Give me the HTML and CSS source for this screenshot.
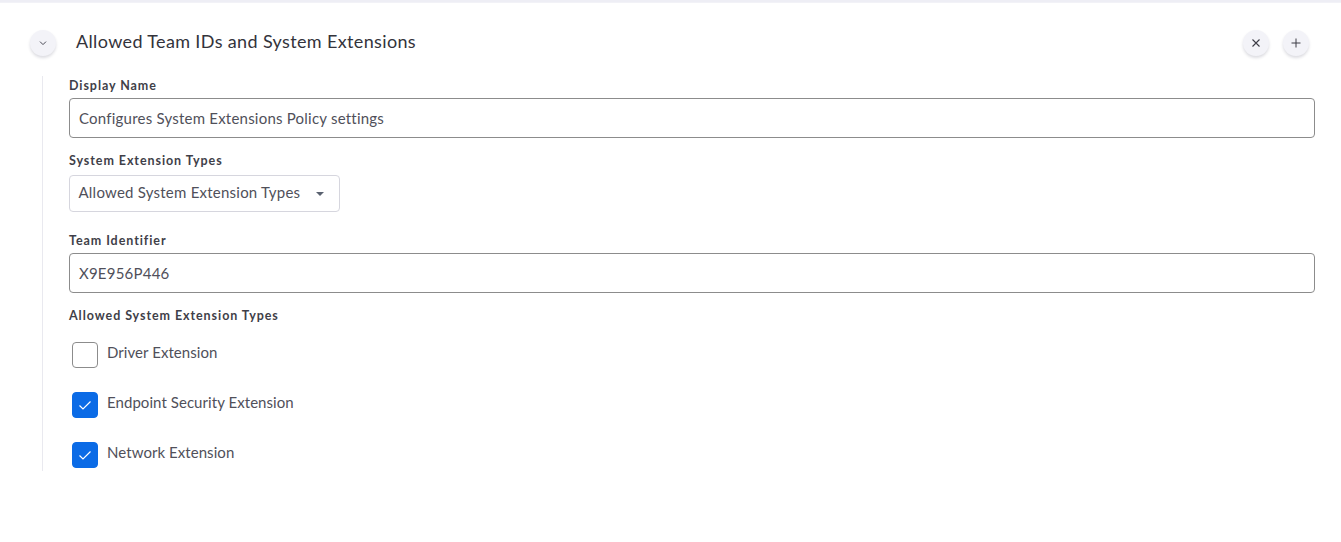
FILE: index.html
```html
<!DOCTYPE html>
<html lang="en">
<head>
<meta charset="utf-8">
<title>Allowed Team IDs and System Extensions</title>
<link rel="stylesheet" href="styles.css">
</head>
<body>
<div class="topbar"></div>
<section class="panel">
  <header class="head">
    <button class="round" type="button" aria-label="Collapse">
      <svg width="10" height="10" viewBox="0 0 10 10"><path d="M2 3.600 5 6.600 8 3.600" fill="none" stroke="#4a4a55" stroke-width="1"/></svg>
    </button>
    <h2 class="title">Allowed Team IDs and System Extensions</h2>
    <div class="actions">
      <button class="round" type="button" aria-label="Remove">
        <svg width="10" height="10" viewBox="0 0 10 10"><path d="M1.500 1.500 8.500 8.500M8.500 1.500 1.500 8.500" fill="none" stroke="#3c3c46" stroke-width="1.100"/></svg>
      </button>
      <button class="round" type="button" aria-label="Add">
        <svg width="10" height="10" viewBox="0 0 10 10"><path d="M5 .5V9.500M.5 5H9.500" fill="none" stroke="#3c3c46" stroke-width="1"/></svg>
      </button>
    </div>
  </header>
  <div class="body">
    <div class="label first">Display Name</div>
    <div class="input">Configures System Extensions Policy settings</div>
    <div class="label l2">System Extension Types</div>
    <div class="select">
      <span>Allowed System Extension Types</span>
      <svg class="caret" width="8" height="4" viewBox="0 0 8 4"><path d="M0 0H8L4 4Z" fill="#5a6270"/></svg>
    </div>
    <div class="label l3">Team Identifier</div>
    <div class="input">X9E956P446</div>
    <div class="label l4">Allowed System Extension Types</div>
    <div class="checks">
      <div class="check"><span class="box"></span><span class="cap">Driver Extension</span></div>
      <div class="check"><span class="box on"><svg width="14" height="14" viewBox="0 0 14 14"><path d="M1.500 7.500 5 11 12.500 3.500" fill="none" stroke="#fff" stroke-width="1.200"/></svg></span><span class="cap">Endpoint Security Extension</span></div>
      <div class="check"><span class="box on"><svg width="14" height="14" viewBox="0 0 14 14"><path d="M1.500 7.500 5 11 12.500 3.500" fill="none" stroke="#fff" stroke-width="1.200"/></svg></span><span class="cap">Network Extension</span></div>
    </div>
  </div>
</section>
</body>
</html>
```
FILE: styles.css
```css
* { box-sizing: border-box; }
html, body { margin: 0; height: 100%; background: #fff; }
body {
  font-family: "Lato", "Liberation Sans", sans-serif;
  color: #33333d;
  overflow: hidden;
}
.topbar { height: 3px; background: #eeeef5; border-bottom: 1px solid #f2f2f7; }
.panel { padding: 27px 26px 0 30px; }
.head { display: flex; align-items: center; height: 26px; }
.round {
  width: 26px; height: 26px; padding: 0; border: 0; border-radius: 50%;
  background: #f3f3f8; box-shadow: 0 2px 3px rgba(40, 40, 70, .16);
  display: flex; align-items: center; justify-content: center; flex: none;
}
.title {
  margin: 0 0 5px 20px; font-size: 18px; font-weight: 400; line-height: 24px;
  color: #33333b; letter-spacing: .36px;
}
.actions { margin-left: auto; display: flex; gap: 14px; padding-right: 6px; }
.body {
  margin: 20px 0 0 12px; padding: 0 0 0 26px; border-left: 1px solid #e9e9ef;
  height: 395px;
}
.label { font-size: 12.500px; font-weight: 700; line-height: 14px; color: #3f3f49; letter-spacing: .93px; }
.first { padding-top: 3px; margin-bottom: 5px; }
.l2 { margin-top: 16px; margin-bottom: 7px; }
.l3 { margin-top: 22px; margin-bottom: 5px; }
.l4 { margin-top: 16px; margin-bottom: 19px; }
.input {
  height: 40px; border: 1px solid #8c8c8c; border-radius: 4px;
  padding: 0 9px; display: flex; align-items: center;
  font-size: 15px; color: #50505a; letter-spacing: .22px;
}
.select {
  width: 271px; height: 37px; border: 1px solid #d6d6de; border-radius: 4px;
  padding: 0 15px 3px 8.500px; display: flex; align-items: center; justify-content: space-between;
  font-size: 15px; color: #50505a; letter-spacing: .23px;
}
.caret { margin-top: 3px; }
.checks { display: flex; flex-direction: column; gap: 24px; padding-left: 3px; }
.check { display: flex; align-items: flex-start; gap: 9px; height: 26px; }
.box {
  width: 26px; height: 26px; border: 1px solid #8c8c8c; border-radius: 4px; background: #fff;
  display: flex; align-items: center; justify-content: center; flex: none;
}
.box.on { background: #0b6be6; border-color: #0b6be6; }
.cap { font-size: 15px; line-height: 20px; color: #50505a; letter-spacing: .06px; }
```
